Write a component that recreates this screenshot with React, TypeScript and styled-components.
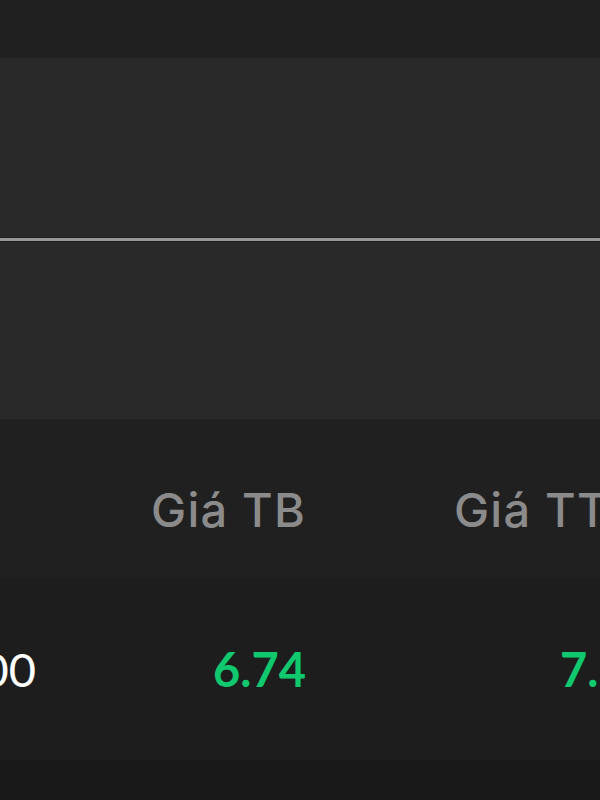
import React from 'react';
import styled, { createGlobalStyle } from 'styled-components';

const GlobalStyle = createGlobalStyle`
  html, body {
    margin: 0;
    padding: 0;
    background: #181818;
    overflow: hidden;
  }
  body {
    font-family: 'Lato', 'Noto Sans', sans-serif;
  }
`;

const Screen = styled.div`
  width: 600px;
  height: 800px;
  display: flex;
  flex-direction: column;
  overflow: hidden;
  background: #181818;
`;

const TopBar = styled.div`
  height: 58px;
  flex-shrink: 0;
  background: #202020;
`;

const ChartPanel = styled.div`
  height: 363px;
  flex-shrink: 0;
  background: #292929;
  padding-top: 180px;
  box-sizing: border-box;
  border-bottom: 2px solid #222222;
`;

const Baseline = styled.div`
  height: 3px;
  background: #979797;
  box-shadow: 0 -1px 0 #1f1f1f, 0 1px 0 #1f1f1f;
`;

const Row = styled.div<{ $bg: string; $h: number; $shift?: number }>`
  height: ${p => p.$h}px;
  flex-shrink: 0;
  box-sizing: border-box;
  padding-top: ${p => p.$shift || 0}px;
  background: ${p => p.$bg};
  display: grid;
  grid-template-columns: 36px 270px 300px;
  align-items: center;
  white-space: nowrap;
`;

const Cell = styled.div<{ $align?: 'left' | 'right'; $pad?: number }>`
  display: flex;
  justify-content: ${p => (p.$align === 'left' ? 'flex-start' : 'flex-end')};
  padding-left: ${p => p.$pad || 0}px;
  min-width: 0;
`;

const HeadText = styled.span`
  font-family: 'Inter', 'Lato', sans-serif;
  font-size: 47px;
  font-weight: 500;
  letter-spacing: 1.2px;
  color: #8b8b8b;
`;

const Value = styled.span<{ $color: string; $weight?: number }>`
  font-size: 47px;
  font-weight: ${p => p.$weight || 700};
  color: ${p => p.$color};
`;

export default function App() {
  return (
    <>
      <GlobalStyle />
      <Screen>
        <TopBar />
        <ChartPanel>
          <Baseline />
        </ChartPanel>
        <Row $bg="#202020" $h={157} $shift={20}>
          <Cell />
          <Cell>
            <HeadText>Giá TB</HeadText>
          </Cell>
          <Cell $align="left" $pad={148}>
            <HeadText>Giá TT</HeadText>
          </Cell>
        </Row>
        <Row $bg="#1d1d1d" $h={182}>
          <Cell>
            <Value $color="#ffffff" $weight={400}>1,000</Value>
          </Cell>
          <Cell>
            <Value $color="#10c96f">6.74</Value>
          </Cell>
          <Cell $align="left" $pad={254}>
            <Value $color="#10c96f">7.25</Value>
          </Cell>
        </Row>
      </Screen>
    </>
  );
}
